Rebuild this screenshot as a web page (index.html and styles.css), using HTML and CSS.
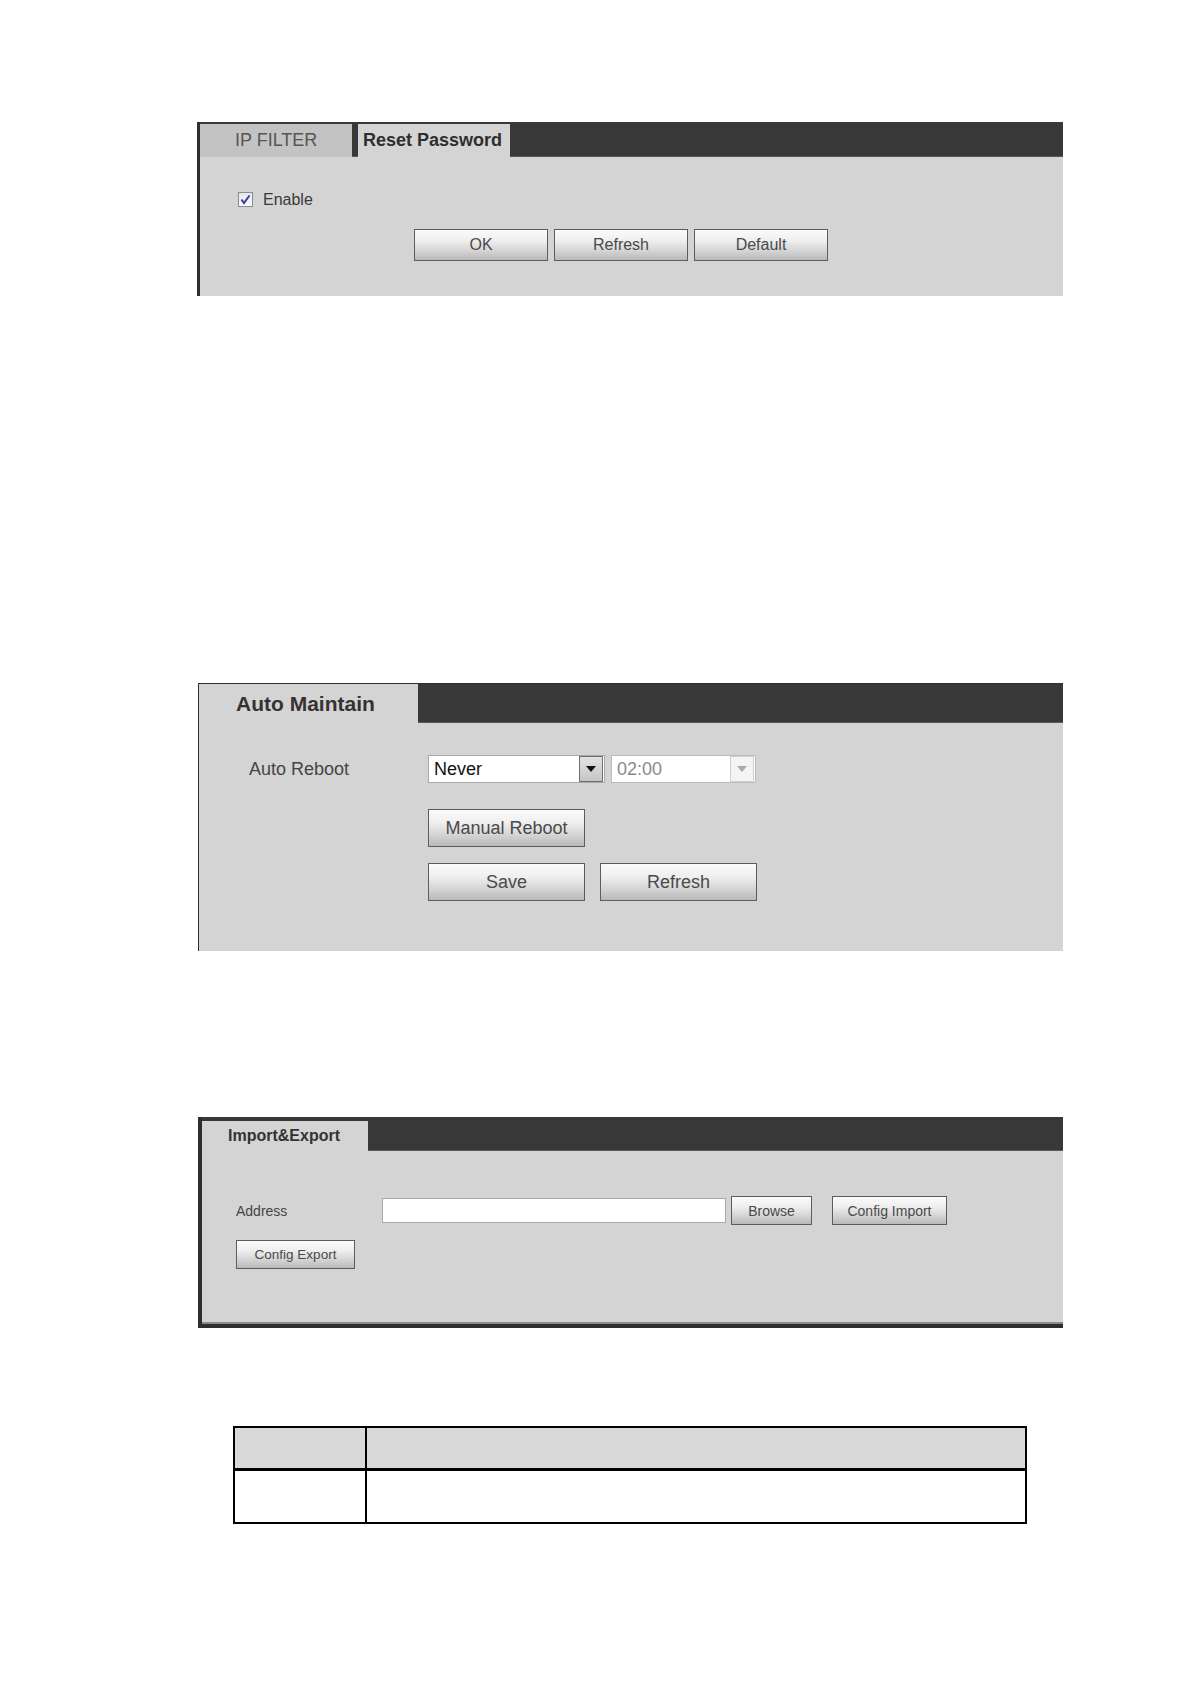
FILE: index.html
```html
<!DOCTYPE html>
<html lang="en">
<head>
<meta charset="utf-8">
<title>Settings</title>
<link rel="stylesheet" href="styles.css">
</head>
<body>
<div class="page">

  <section class="panel p1">
    <div class="hdr hdr1">
      <div class="tab1 tab-off">IP FILTER</div>
      <div class="tab1 tab-on">Reset Password</div>
    </div>
    <div class="body1">
      <label class="chk-row">
        <span class="chk"><svg viewBox="0 0 13 13" width="13" height="13"><path d="M2.5 6.5 L5 10 L10.5 2.5" fill="none" stroke="#3b3ba8" stroke-width="2"/></svg></span>
        <span class="chk-label">Enable</span>
      </label>
      <div class="btns1">
        <button class="btn b1">OK</button>
        <button class="btn b1">Refresh</button>
        <button class="btn b1">Default</button>
      </div>
    </div>
  </section>

  <section class="panel p2">
    <div class="hdr hdr2">
      <div class="tab2">Auto Maintain</div>
    </div>
    <div class="body2">
      <div class="row2">
        <div class="lbl2">Auto Reboot</div>
        <div class="sel sel-never">
          <span class="sel-text">Never</span>
          <span class="sel-arrow"><svg viewBox="0 0 10 6" width="10" height="6"><path d="M0 0 H10 L5 6 Z" fill="#111"/></svg></span>
        </div>
        <div class="sel sel-time">
          <span class="sel-text">02:00</span>
          <span class="sel-arrow"><svg viewBox="0 0 10 6" width="10" height="6"><path d="M0 0 H10 L5 6 Z" fill="#aaa"/></svg></span>
        </div>
      </div>
      <div class="row2 btnrow2 first">
        <button class="btn b2">Manual Reboot</button>
      </div>
      <div class="row2 btnrow2 second">
        <button class="btn b2">Save</button>
        <button class="btn b2">Refresh</button>
      </div>
    </div>
  </section>

  <section class="panel p3">
    <div class="hdr hdr3">
      <div class="tab3">Import&amp;Export</div>
    </div>
    <div class="body3">
      <div class="row3">
        <div class="lbl3">Address</div>
        <input class="addr" type="text" value="">
        <button class="btn b3 browse">Browse</button>
        <button class="btn b3 cimport">Config Import</button>
      </div>
      <div class="row3b">
        <button class="btn b3 cexport">Config Export</button>
      </div>
    </div>
  </section>

  <table class="tbl">
    <thead>
      <tr><th class="c1"></th><th class="c2"></th></tr>
    </thead>
    <tbody>
      <tr><td class="c1"></td><td class="c2"></td></tr>
    </tbody>
  </table>

</div>
</body>
</html>
```

FILE: styles.css
```css
* { box-sizing: border-box; }
html, body { margin: 0; padding: 0; background: #fff; }
body { font-family: "Liberation Sans", Arial, sans-serif; color: #444; }

.page {
  display: flex;
  flex-direction: column;
  align-items: flex-start;
  padding: 122px 0 0 197px;
}

.panel { background: #d4d4d4; }

.hdr {
  display: flex;
  align-items: flex-end;
  background: #383838;
  box-shadow: inset 0 -1px 0 #595959;
}

.btn {
  font-family: "Liberation Sans", Arial, sans-serif;
  color: #4a4a4a;
  border: 1px solid #5c5c5c;
  background: linear-gradient(#fbfbfb 0%, #efefef 35%, #d4d4d4 70%, #b9b9b9 100%);
  padding: 0;
  margin: 0;
  display: flex;
  align-items: center;
  justify-content: center;
}

/* ---------- panel 1 ---------- */
.p1 { width: 866px; border-left: 3px solid #2e2e2e; }
.hdr1 { height: 35px; }
.tab1 {
  width: 152px;
  height: 33px;
  display: flex;
  align-items: center;
  font-size: 18px;
}
.tab-off {
  background: #c3c3c3;
  color: #555;
  padding-left: 35px;
}
.tab-on {
  margin-left: 6px;
  background: #d4d4d4;
  color: #2e2e2e;
  font-weight: bold;
  padding-left: 5px;
}
.body1 { padding: 35px 0 35px 38px; }
.chk-row { display: flex; align-items: center; height: 15px; }
.chk {
  width: 15px;
  height: 15px;
  border: 1px solid #8c8c8c;
  background: linear-gradient(#e6e6ee, #fafafa);
  display: flex;
  align-items: center;
  justify-content: center;
}
.chk-label { margin-left: 10px; font-size: 16px; color: #3a3a3a; }
.btns1 { display: flex; gap: 6px; margin: 22px 0 0 176px; }
.b1 { width: 134px; height: 32px; font-size: 16px; }

/* ---------- panel 2 ---------- */
.p2 {
  width: 865px;
  margin: 387px 0 0 1px;
  border-top: 1px solid #2e2e2e;
  border-left: 1px solid #2e2e2e;
}
.hdr2 { height: 39px; }
.tab2 {
  width: 219px;
  height: 39px;
  background: #d4d4d4;
  display: flex;
  align-items: center;
  padding-left: 37px;
  font-size: 21px;
  font-weight: bold;
  color: #333;
}
.body2 { padding: 32px 0 50px 50px; }
.row2 { display: flex; align-items: center; }
.lbl2 { width: 179px; font-size: 18px; color: #444; }
.sel {
  height: 28px;
  display: flex;
  align-items: center;
  justify-content: space-between;
  background: #fff;
  padding: 0 1px 0 5px;
}
.sel-text { font-size: 18px; }
.sel-never { width: 177px; border: 1px solid #a9a9a9; }
.sel-never .sel-text { color: #111; }
.sel-time { width: 145px; margin-left: 6px; border: 1px solid #bcbcbc; }
.sel-time .sel-text { color: #8a8a8a; }
.sel-arrow {
  width: 24px;
  height: 26px;
  display: flex;
  align-items: center;
  justify-content: center;
}
.sel-never .sel-arrow { border: 1px solid #6e6e6e; background: linear-gradient(#e2e2e2, #c6c6c6); }
.sel-time .sel-arrow { border: 1px solid #d0d0d0; background: #f4f4f4; }
.btnrow2 { padding-left: 179px; gap: 15px; }
.btnrow2.first { margin-top: 26px; }
.btnrow2.second { margin-top: 16px; }
.b2 { width: 157px; height: 38px; font-size: 18px; }

/* ---------- panel 3 ---------- */
.p3 {
  width: 865px;
  margin: 166px 0 0 1px;
  border-left: 4px solid #2e2e2e;
  border-bottom: 4px solid #2e2e2e;
  box-shadow: inset 0 -2px 0 #8a8a8a;
}
.hdr3 { height: 34px; }
.tab3 {
  width: 166px;
  height: 30px;
  background: #d4d4d4;
  display: flex;
  align-items: center;
  padding-left: 26px;
  font-size: 16px;
  font-weight: bold;
  color: #333;
}
.body3 { padding: 45px 0 55px 34px; }
.row3 { display: flex; align-items: center; height: 29px; }
.lbl3 { width: 146px; font-size: 14px; color: #444; }
.addr {
  width: 344px;
  height: 25px;
  margin: 0;
  border: 1px solid #a8a8a8;
  background: #fff;
  outline: none;
}
.b3 { height: 29px; font-size: 14px; }
.browse { width: 81px; margin-left: 5px; }
.cimport { width: 115px; margin-left: 20px; }
.row3b { margin-top: 15px; display: flex; }
.cexport { width: 119px; font-size: 13.5px; }

/* ---------- table ---------- */
.tbl {
  margin: 98px 0 0 36px;
  width: 794px;
  border-collapse: collapse;
}
.tbl th, .tbl td { border: 2px solid #000; padding: 0; }
.tbl th { background: #d9d9d9; height: 42px; border-bottom-width: 3px; }
.tbl td { height: 54px; }
.tbl .c1 { width: 132px; }
```
